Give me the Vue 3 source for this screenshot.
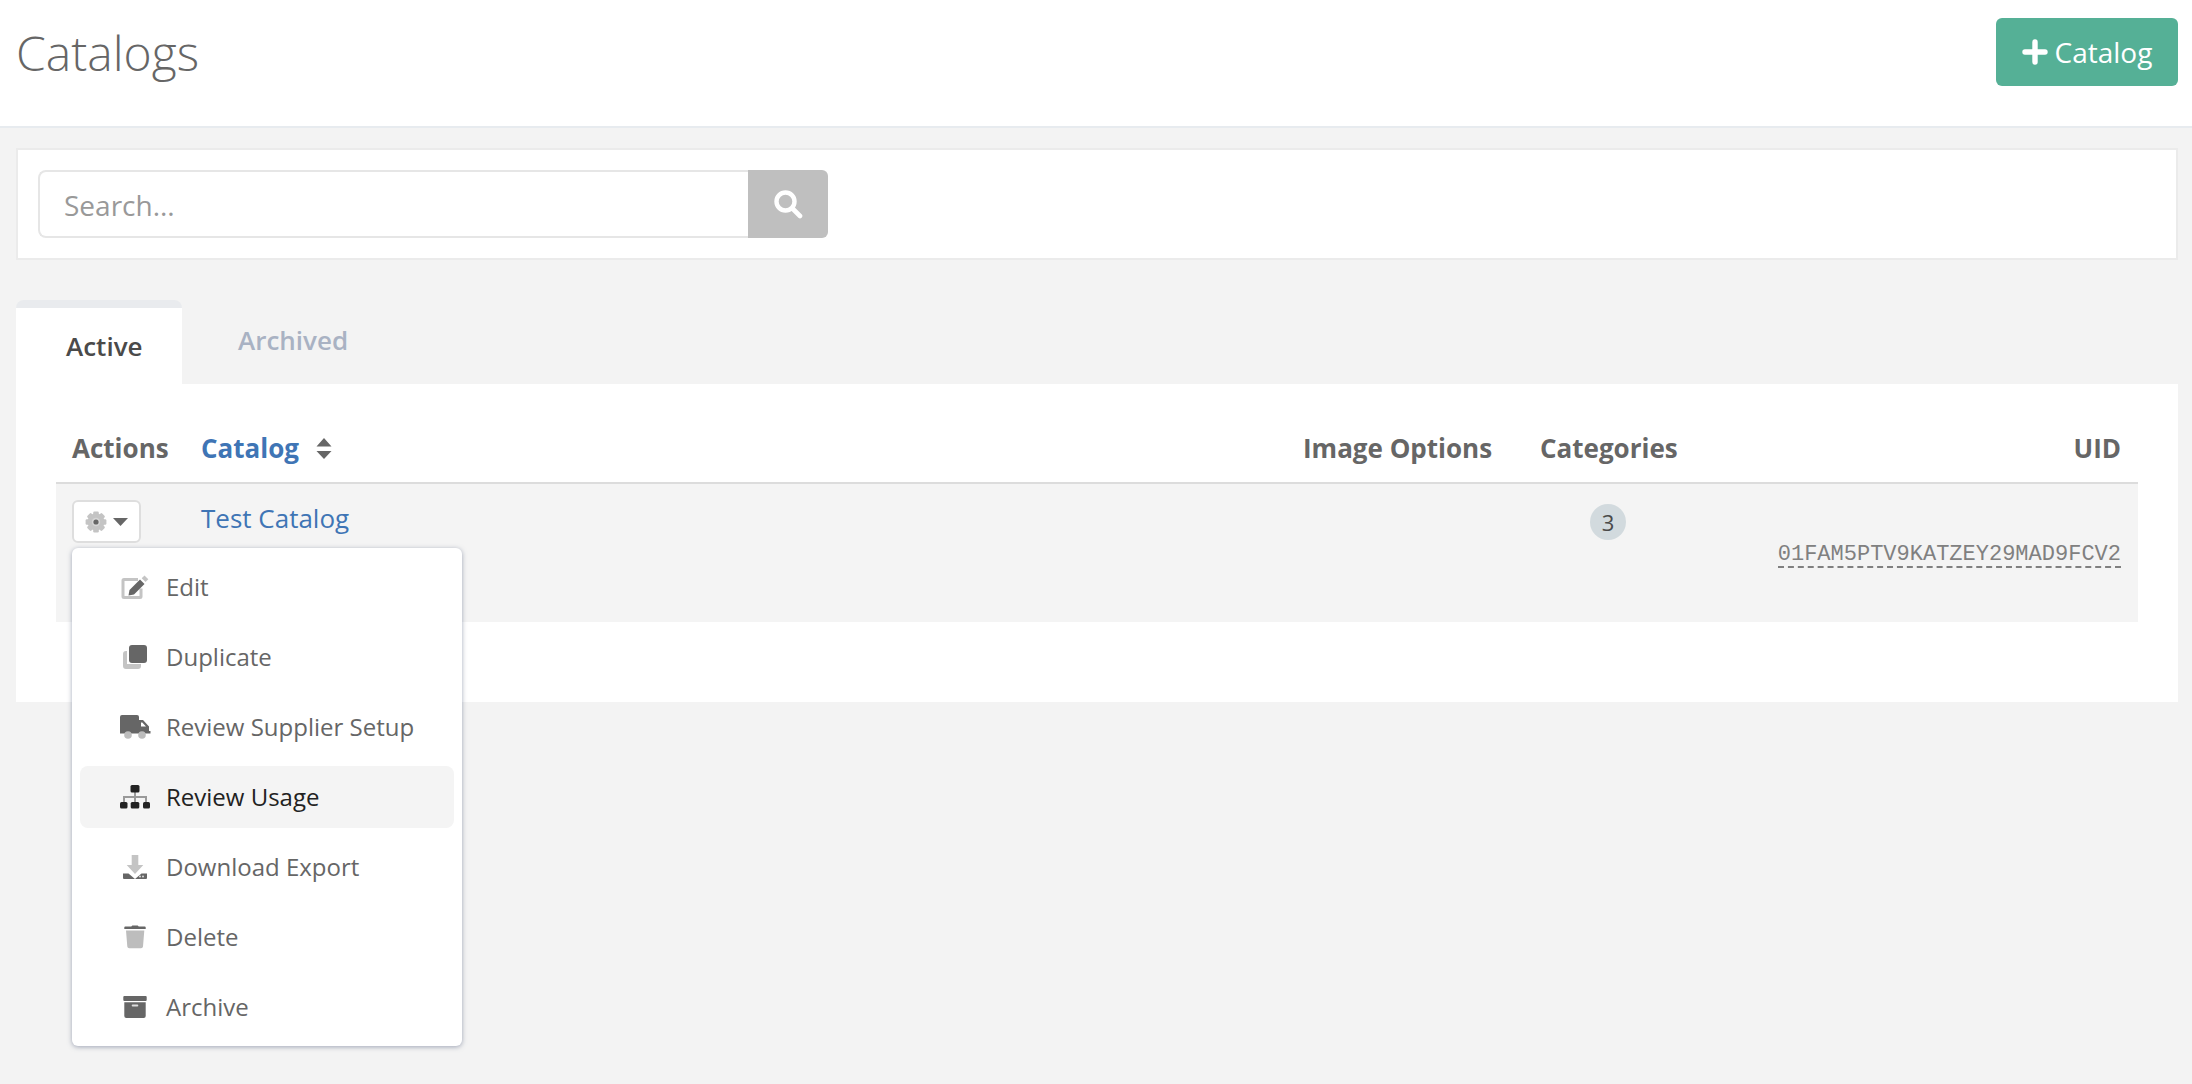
<script setup>
const items = [
  { key: 'edit', label: 'Edit' },
  { key: 'duplicate', label: 'Duplicate' },
  { key: 'truck', label: 'Review Supplier Setup' },
  { key: 'sitemap', label: 'Review Usage', active: true },
  { key: 'download', label: 'Download Export' },
  { key: 'trash', label: 'Delete' },
  { key: 'archive', label: 'Archive' }
]
const teeth = [0, 45, 90, 135]
</script>

<template>
  <div class="page">
    <header class="topbar">
      <h1 class="title">Catalogs</h1>
      <button class="add-btn">
        <svg class="plus" width="26" height="26" viewBox="0 0 26 26"><path d="M13 3v20M3 13h20" stroke="#fff" stroke-width="5.4" stroke-linecap="round" /></svg>
        <span>Catalog</span>
      </button>
    </header>

    <main class="content">
      <section class="search-panel">
        <div class="search">
          <input class="search-input" placeholder="Search..." />
          <button class="search-btn" aria-label="Search">
            <svg width="30" height="30" viewBox="0 0 30 30" fill="none">
              <circle cx="12.5" cy="12.5" r="9" stroke="#fff" stroke-width="4.4" />
              <path d="M19.5 19.5l7.5 7.5" stroke="#fff" stroke-width="4.6" stroke-linecap="round" />
            </svg>
          </button>
        </div>
      </section>

      <nav class="tabs">
        <a class="tab tab-active">Active</a>
        <a class="tab tab-idle">Archived</a>
      </nav>

      <section class="card">
        <table class="table">
          <colgroup>
            <col class="c-actions" />
            <col />
            <col class="c-image" />
            <col class="c-cats" />
            <col class="c-uid" />
          </colgroup>
          <thead>
            <tr>
              <th>Actions</th>
              <th>
                <span class="sort-link">Catalog</span>
                <svg class="sort" width="16" height="21" viewBox="0 0 16 21"><path d="M8 0l7.500 8.500H.5zM8 21l7.500-8H.5z" fill="#666" /></svg>
              </th>
              <th>Image Options</th>
              <th class="center">Categories</th>
              <th class="right">UID</th>
            </tr>
          </thead>
          <tbody>
            <tr>
              <td>
                <div class="actions">
                  <button class="gear-btn" aria-label="Actions">
                    <svg width="22" height="22" viewBox="0 0 22 22">
                      <rect v-for="a in teeth" :key="a" x="8.200" y="0.600" width="5.600" height="20.800" rx="1.200" fill="#c4c4c4" :transform="`rotate(${a} 11 11)`" />
                      <circle cx="11" cy="11" r="8.400" fill="#c4c4c4" />
                      <circle cx="11" cy="11" r="4.200" fill="#d6d6d6" />
                      <circle cx="11" cy="11" r="2.600" fill="#666" />
                    </svg>
                    <svg width="15" height="8" viewBox="0 0 15 8"><path d="M0 0h15L7.500 8z" fill="#666" /></svg>
                  </button>
                  <ul class="menu">
                    <li v-for="item in items" :key="item.key" class="menu-item" :class="{ active: item.active }">
                      <svg class="icon" width="32" height="28" viewBox="0 0 32 28">
                        <template v-if="item.key === 'edit'">
                          <path fill="none" stroke="#c4c4c4" stroke-width="3" stroke-linejoin="round" d="M19 6.500H5a1 1 0 0 0-1 1v16a1 1 0 0 0 1 1h16a1 1 0 0 0 1-1v-8" />
                          <path fill="#666" d="M21 6.500l4.500 4.500-10.500 10.500-5.500 1 1-5.500z" />
                          <path fill="#c4c4c4" d="M25.500 2.500l3.800 3.800-2.800 2.800-3.800-3.800z" />
                        </template>
                        <template v-else-if="item.key === 'duplicate'">
                          <path fill="#c4c4c4" d="M4 11a3 3 0 0 1 3-3h1v13h14v2a3 3 0 0 1-3 3H7a3 3 0 0 1-3-3z" />
                          <rect x="10" y="2" width="18" height="18" rx="3" fill="#666" />
                        </template>
                        <template v-else-if="item.key === 'truck'">
                          <path fill="#666" d="M3 2h15a2 2 0 0 1 2 2v3h4l6 6.500V18h1.500v2.500H1V4a2 2 0 0 1 2-2zM22 9.500v4h5l-3.700-4z" />
                          <circle cx="9" cy="22" r="3.800" fill="#bdbdbd" />
                          <circle cx="23" cy="22" r="3.800" fill="#bdbdbd" />
                        </template>
                        <template v-else-if="item.key === 'sitemap'">
                          <path fill="none" stroke="#999" stroke-width="2" d="M16 9v10M5 19v-5h22v5" />
                          <rect x="11.500" y="2" width="9" height="7.500" rx="1.500" fill="#222" />
                          <rect x="1" y="19" width="7.500" height="6.500" rx="1.500" fill="#222" />
                          <rect x="11.700" y="19" width="8.600" height="6.500" rx="1.500" fill="#222" />
                          <rect x="24" y="19" width="7" height="6.500" rx="1.500" fill="#222" />
                        </template>
                        <template v-else-if="item.key === 'download'">
                          <path fill="#c4c4c4" d="M12.700 2h6.600v10h5l-8.300 9-8.300-9h5z" />
                          <path fill="#666" d="M4 20.500h5.500L16 26l6.500-5.500H28V25a1 1 0 0 1-1 1H5a1 1 0 0 1-1-1z" />
                          <circle cx="21" cy="23.500" r="1" fill="#ddd" />
                          <circle cx="24" cy="23.500" r="1" fill="#ddd" />
                        </template>
                        <template v-else-if="item.key === 'trash'">
                          <path fill="#666" d="M5.300 4.500a1 1 0 0 1 1-1h6l1-1h5.400l1 1h6a1 1 0 0 1 1 1V6H5.300z" />
                          <path fill="#bdbdbd" d="M7 7.500h18.300L24 23.500a2 2 0 0 1-2 1.800H10.300a2 2 0 0 1-2-1.800z" />
                        </template>
                        <template v-else>
                          <rect x="4.300" y="3" width="23.400" height="5" rx="1" fill="#666" />
                          <path fill="#666" d="M5.300 9.300h21.400V23a2 2 0 0 1-2 2H7.300a2 2 0 0 1-2-2z" />
                          <rect x="12.700" y="11.500" width="6.600" height="2" rx="1" fill="#ddd" />
                        </template>
                      </svg>
                      <span class="menu-label">{{ item.label }}</span>
                    </li>
                  </ul>
                </div>
              </td>
              <td><a class="catalog-link">Test Catalog</a></td>
              <td></td>
              <td class="center"><span class="badge">3</span></td>
              <td class="right uid-cell"><span class="uid">01FAM5PTV9KATZEY29MAD9FCV2</span></td>
            </tr>
          </tbody>
        </table>
      </section>
    </main>
  </div>
</template>

<style>
html, body { background: #f3f3f3; }
</style>

<style scoped>
.page {
  min-height: 1084px;
  background: #f3f3f3;
  font-family: "Open Sans", "Liberation Sans", sans-serif;
  color: #666;
}
.topbar {
  height: 126px;
  box-sizing: content-box;
  background: #fff;
  border-bottom: 2px solid #e7ebef;
  display: flex;
  align-items: flex-start;
  justify-content: space-between;
  padding: 0 14px 0 16px;
}
.title {
  margin: 22px 0 0;
  font-size: 48px;
  line-height: 62px;
  font-weight: 300;
  color: #666;
}
.add-btn {
  margin-top: 18px;
  width: 182px;
  height: 68px;
  border: 0;
  border-radius: 6px;
  background: #55b096;
  color: #fff;
  font: 400 28px/1 "Open Sans", sans-serif;
  display: flex;
  align-items: center;
  justify-content: center;
  gap: 7px;
  padding: 0;
}
.content {
  padding: 20px 14px 0 16px;
}
.search-panel {
  background: #fff;
  border: 2px solid #ebebeb;
  height: 112px;
  box-sizing: border-box;
  padding: 20px 20px;
}
.search {
  display: flex;
  width: 790px;
  height: 68px;
}
.search-input {
  flex: 1;
  min-width: 0;
  box-sizing: border-box;
  border: 2px solid #e6e6e6;
  border-right: 0;
  border-radius: 8px 0 0 8px;
  padding: 2px 24px 0;
  outline: 0;
  font: 400 28px "Open Sans", sans-serif;
  color: #666;
  background: #fff;
}
.search-input::placeholder { color: #999; opacity: 1; }
.search-btn {
  width: 80px;
  border: 0;
  padding: 0;
  background: #bfbfbf;
  border-radius: 0 6px 6px 0;
  display: flex;
  align-items: center;
  justify-content: center;
}
.tabs {
  display: flex;
  align-items: flex-start;
  margin-top: 40px;
  height: 84px;
}
.tab {
  font-size: 26px;
  line-height: 36px;
  font-weight: 600;
}
.tab-active {
  box-sizing: border-box;
  height: 84px;
  width: 166px;
  padding: 20px 0 0 50px;
  background: #fff;
  border-top: 8px solid #e9ebee;
  border-radius: 8px 8px 0 0;
  color: #4a4a4a;
}
.tab-idle {
  margin-left: 56px;
  padding-top: 22px;
  color: #a9b2c3;
}
.card {
  background: #fff;
  height: 318px;
  box-sizing: border-box;
  padding: 0 40px;
}
.table {
  width: 100%;
  table-layout: fixed;
  border-collapse: collapse;
}
.c-actions { width: 129px; }
.c-image { width: 237px; }
.c-cats { width: 168px; }
.c-uid { width: 446px; }
th {
  height: 99px;
  box-sizing: border-box;
  padding: 0 16px 16px;
  vertical-align: bottom;
  text-align: left;
  font-size: 26px;
  line-height: 36px;
  font-weight: 700;
  color: #666;
  border-bottom: 2px solid #dcdcdc;
  white-space: nowrap;
}
th.center, td.center { text-align: center; }
th.right, td.right { text-align: right; padding-right: 17px; }
.sort-link { color: #3f75b5; }
.sort { margin-left: 17px; vertical-align: -1px; }
td {
  height: 139px;
  box-sizing: border-box;
  background: #f4f4f4;
  padding: 16px 16px 0;
  vertical-align: top;
  font-size: 26px;
}
.actions {
  position: relative;
  width: 69px;
}
.gear-btn {
  box-sizing: border-box;
  width: 69px;
  height: 43px;
  background: #fff;
  border: 2px solid #dedede;
  border-radius: 6px;
  padding: 0;
  display: flex;
  align-items: center;
  justify-content: center;
  gap: 6px;
}
.menu {
  position: absolute;
  z-index: 5;
  top: 48px;
  left: 0;
  width: 390px;
  box-sizing: border-box;
  margin: 0;
  padding: 8px;
  list-style: none;
  background: #fff;
  border-radius: 6px;
  box-shadow: 0 1px 5px rgba(90, 100, 130, 0.55);
  display: flex;
  flex-direction: column;
  gap: 8px;
}
.menu-item {
  height: 62px;
  display: flex;
  align-items: center;
  padding-left: 39px;
  border-radius: 8px;
  font-size: 24px;
  color: #666;
  white-space: nowrap;
}
.menu-item.active {
  background: #f4f4f4;
  color: #222;
}
.menu-label { margin-bottom: 2px; }
.icon { flex: none; margin-right: 15px; }
.catalog-link {
  color: #3f75b5;
  font-size: 26px;
  line-height: 36px;
}
.badge {
  display: inline-block;
  width: 36px;
  height: 36px;
  margin-top: 4px;
  border-radius: 50%;
  background: #d2dade;
  color: #4a4a4a;
  font-size: 22px;
  line-height: 36px;
  text-align: center;
}
.uid-cell { padding-top: 0; }
.uid {
  display: inline-block;
  margin-top: 60px;
  font: 400 22px/22px "Liberation Mono", monospace;
  color: #808080;
  border-bottom: 2px dashed #808080;
}
</style>
